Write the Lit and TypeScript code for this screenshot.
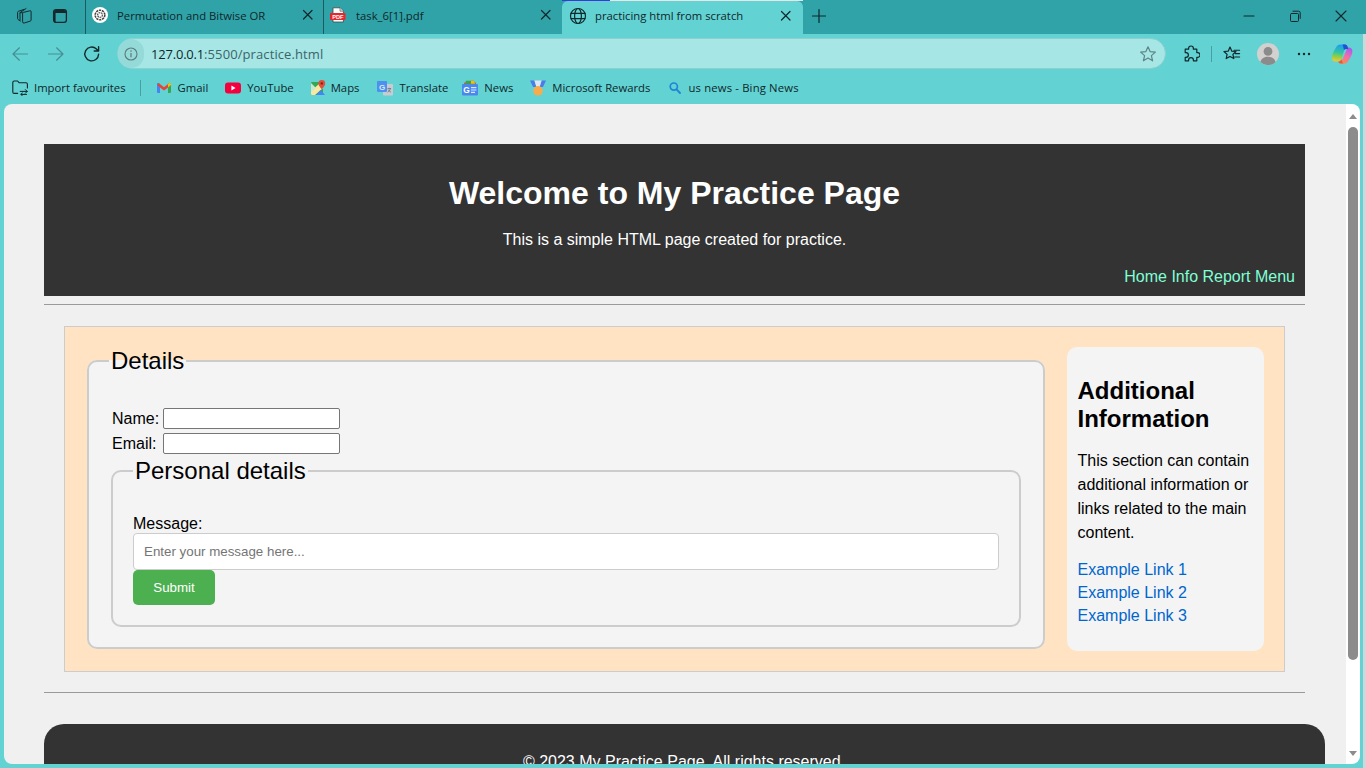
import { LitElement, html, css, svg } from "lit";
import { customElement } from "lit/decorators.js";

const line = (d: string, w = 1.2, c = "#1c2b2c") =>
  svg`<path d=${d} fill="none" stroke=${c} stroke-width=${w} stroke-linecap="round" stroke-linejoin="round"/>`;

const icon = (size: number, body: unknown) =>
  html`<svg width=${size} height=${size} viewBox="0 0 ${size} ${size}">${body}</svg>`;

const closeX = icon(12, line("M1.5 1.5 10 10M10 1.5 1.5 10", 1.2, "#10272a"));

const globe = icon(
  18,
  svg`<circle cx="9" cy="9" r="7.5" fill="none" stroke="#0f2a2d" stroke-width="1.2"/>
    <ellipse cx="9" cy="9" rx="3.4" ry="7.5" fill="none" stroke="#0f2a2d" stroke-width="1.2"/>
    ${line("M2 6.4h14M2 11.6h14", 1.2, "#0f2a2d")}`,
);

const knot = icon(
  18,
  svg`<circle cx="9" cy="9" r="8" fill="#fff"/>
    <circle cx="9" cy="9" r="4.8" fill="none" stroke="#444" stroke-width="1.6" stroke-dasharray="2.2 .8"/>
    <circle cx="9" cy="9" r="2.4" fill="none" stroke="#555" stroke-width="1.3" stroke-dasharray="1.6 .6"/>`,
);

const pdf = icon(
  16,
  svg`<path d="M3 .8h7l3.4 3.4V15H3z" fill="#fff" stroke="#444" stroke-width=".8"/>
    <path d="M10 .8v3.4h3.4" fill="#ddd" stroke="#444" stroke-width=".6"/>
    <rect x="0" y="6" width="15.5" height="7" rx="1" fill="#e8262b"/>
    <text x="7.8" y="11.7" text-anchor="middle" font-family="Liberation Sans" font-size="5.6" font-weight="700" fill="#fff">PDF</text>`,
);

const workspaces = icon(
  18,
  line("M7.6 6.4a1 1 0 0 1 .7-1L14.8 3.8a1 1 0 0 1 1.3 1V13a1.2 1.2 0 0 1-.8 1.1L9.2 16a1.2 1.2 0 0 1-1.6-1.1ZM5.4 14 3.2 12.6a1.2 1.2 0 0 1-.6-1V5.4a1.2 1.2 0 0 1 .8-1.1L9 2.4M5 5.6 11 1.6M7.6 5.8 5 5.6 5 13", 1, "#14282b"),
);

const tabsIcon = icon(
  16,
  svg`<rect x="1.6" y="1.6" width="12.8" height="12.8" rx="2.4" fill="none" stroke="#14282b" stroke-width="1.3"/>
    <path d="M2 4a2 2 0 0 1 2-2h8a2 2 0 0 1 2 2v1H3.6v9H2z" fill="#14282b"/>`,
);

const back = (c: string) => icon(18, line("M16.5 9H2M8.4 2.8 2 9l6.4 6.2", 1.2, c));
const forward = (c: string) => icon(18, line("M1.5 9H16M9.6 2.8 16 9l-6.4 6.2", 1.2, c));
const reload = icon(18, line("M15.6 9.2A6.9 6.9 0 1 1 13.4 3.9L15.6 6M15.6 1.6V6H11.2", 1.4, "#13282b"));

const info = icon(
  14,
  svg`<circle cx="7" cy="7" r="6" fill="none" stroke="#5c7b7c" stroke-width="1.1"/>
    <path d="M7 6v4.2" stroke="#5c7b7c" stroke-width="1.2"/>
    <circle cx="7" cy="4" r=".8" fill="#5c7b7c"/>`,
);

const star = (c: string) =>
  line("M9 1.8 11.1 6.6 16.4 7.1 12.4 10.6 13.6 15.8 9 13.1 4.4 15.8 5.6 10.6 1.6 7.1 6.9 6.6Z", 1.2, c);

const extensions = icon(
  18,
  line("M6.6 4.2V3.4a2.4 2.4 0 0 1 4.8 0v.8h3.4v3.4h.8a2.4 2.4 0 0 1 0 4.8h-.8v3.4h-3.4v-.8a2.4 2.4 0 0 0-4.8 0v.8H3.2v-3.4h.8a2.4 2.4 0 0 0 0-4.8h-.8V4.2z", 1.2, "#10272a"),
);

const favourites = icon(
  18,
  svg`${line("M7 2 8.8 6.2 13 6.5 9.9 9.4 10.8 13.6 7 11.4 3.2 13.6 4.1 9.4 1 6.5 5.2 6.2Z", 1.2, "#10272a")}
    ${line("M11 5.2H16.6M12.2 8.6H16.6M11.6 12H16.6", 1.1, "#10272a")}`,
);

const avatar = icon(
  22,
  svg`<circle cx="11" cy="11" r="11" fill="#d3d1cf"/>
    <circle cx="11" cy="8.4" r="4.4" fill="#8b8b8b"/>
    <path d="M3.4 19C4.4 15.2 7.4 13.8 11 13.8s6.6 1.4 7.6 5.2A11 11 0 0 1 3.4 19Z" fill="#8b8b8b"/>`,
);

const dots = icon(
  16,
  svg`<circle cx="3" cy="8" r="1.2" fill="#10272a"/><circle cx="8" cy="8" r="1.2" fill="#10272a"/><circle cx="13" cy="8" r="1.2" fill="#10272a"/>`,
);

const copilot = html`<svg width="22" height="22" viewBox="0 0 22 22">
  <defs>
    <linearGradient id="cpa" x1="0.5" y1="0" x2="0.4" y2="1">
      <stop offset="0" stop-color="#1c9cf0"/><stop offset=".45" stop-color="#2fc4a8"/><stop offset=".75" stop-color="#9ccf3c"/><stop offset="1" stop-color="#f0c83c"/>
    </linearGradient>
    <linearGradient id="cpb" x1="0.7" y1="0" x2="0.3" y2="1">
      <stop offset="0" stop-color="#a45cf0"/><stop offset=".5" stop-color="#f06cb0"/><stop offset="1" stop-color="#ff8c40"/>
    </linearGradient>
  </defs>
  <path d="M5.6 3.6C6.4 2.2 7.8 1.4 9.4 1.4H15L10.6 15.6C10 17.6 8.6 18.6 7 18.6H4.4C2 18.6.4 16.6.8 14.2 1.2 10.6 3.6 7 5.6 3.6z" fill="url(#cpa)"/>
  <path d="M16.4 4.4h1.4c2.4 0 4 2 3.6 4.4-.4 3.4-2.4 6.6-4.4 9.4-.8 1.4-2.2 2.4-3.8 2.4H7.6c1.8-.4 3-1.6 3.6-3.4z" fill="url(#cpb)"/>
  <path d="M11.6 1.4H14c1.2 0 2.2.8 2.6 2l.8 3c-1.6-.8-3.2-.6-4.4.6L12.2 3.6c-.2-.8-.4-1.6-.6-2.2z" fill="#2450d0"/>
  <path d="M7.2 18.6c1.4 0 2.6-.8 3.2-2.4l.8 2.4c.2.8.6 1.4 1.2 2H9.8c-1.2 0-2.2-.8-2.6-2z" fill="#f0553c"/>
</svg>`;

const importFav = icon(
  16,
  svg`${line("M5.6 13.4H2.2A1.4 1.4 0 0 1 .8 12V2.4A1.4 1.4 0 0 1 2.2 1H5.6L7.2 2.8H14A1.4 1.4 0 0 1 15.4 4.2V8", 1.1, "#10272a")}
    ${line("M8.2 11.4H15.2M13.4 9.6l1.8 1.8-1.8 1.8M14.6 14.4H9M10.4 13l-1.6 1.4 1.6 1.4", 1, "#10272a")}`,
);

const gmail = icon(
  16,
  svg`<path d="M1 4.2c0-1 1-1.6 1.8-1L4 4v9H2a1 1 0 0 1-1-1z" fill="#4285f4"/>
    <path d="M15 4.2c0-1-1-1.6-1.8-1L12 4v9h2a1 1 0 0 0 1-1z" fill="#34a853"/>
    <path d="M2.6 3 8 7.2 13.4 3 12 7.4 8 10.4 4 7.4 1.2 5z" fill="#ea4335"/>
    <path d="M12 4l1.2-.9c.8-.5 1.8 0 1.8 1v1L12 7.4z" fill="#fbbc04"/>`,
);

const youtube = icon(
  16,
  svg`<rect x="0" y="2.5" width="16" height="11" rx="3" fill="#f5003c"/><path d="M6.4 5.6v4.8L10.6 8z" fill="#fff"/>`,
);

const maps = icon(
  16,
  svg`<rect x="1" y="2" width="12" height="13" rx="1" fill="#34a853"/><path d="M1 11 9 4l4 4-8 7H2a1 1 0 0 1-1-1z" fill="#fbe8a0"/>
    <path d="M6 15l4.6-5L15 15z" fill="#4285f4"/><path d="M1 3l5 5-5 4z" fill="#c9e8ce"/>
    <path d="M11.8 0a3.4 3.4 0 0 1 3.4 3.4c0 2.4-3.4 5.6-3.4 5.6S8.4 5.8 8.4 3.4A3.4 3.4 0 0 1 11.8 0z" fill="#e0503c"/>
    <circle cx="11.8" cy="3.4" r="1.2" fill="#8c1c14"/>`,
);

const translate = icon(
  16,
  svg`<rect x="6" y="4" width="10" height="11.5" rx="1" fill="#c7ccd2"/>
    <rect x="0" y="1" width="10" height="11" rx="1" fill="#4d90f0"/>
    <text x="5" y="9.8" text-anchor="middle" font-family="Liberation Sans" font-size="8" font-weight="700" fill="#dbe8fc">G</text>
    <path d="M10.5 8.6h3.6M12.2 7.8v.8M13.4 8.6c-.4 1.6-1.6 3-2.8 3.6M11.2 9.6c.6 1.2 1.6 2.2 2.8 2.6" stroke="#5a6670" stroke-width=".7" fill="none"/>`,
);

const news = icon(
  16,
  svg`<path d="M2.4 2.6 13.6 2.6 14.6 6H1.4z" fill="#ea4335"/>
    <path d="M4 .8h8l1 3H3z" fill="#34a853"/><path d="M9 .8h3l1 3H9z" fill="#fbbc04"/>
    <rect x="0" y="4" width="16" height="11.6" rx="1" fill="#4a88ee"/>
    <text x="4.6" y="13" text-anchor="middle" font-family="Liberation Sans" font-size="8.4" font-weight="700" fill="#fff">G</text>
    <path d="M9 7.6h5.4M9 10h5.4M9 12.4h4" stroke="#dbe8fc" stroke-width="1.2"/>`,
);

const rewards = icon(
  16,
  svg`<path d="M0 .6h4.4L6.4 7H3z" fill="#4a7de8"/><path d="M16 .6h-4.4L9.6 7H13z" fill="#4a7de8"/>
    <path d="M4.4.6h7.2L9.6 7H6.4z" fill="#dfe6f6"/>
    <circle cx="8" cy="10.8" r="4.8" fill="#f7ac4c"/>`,
);

const search = icon(
  14,
  svg`<circle cx="5.8" cy="5.6" r="3.6" fill="none" stroke="#1f86d6" stroke-width="1.7"/>${line("M8.6 8.4 12 12", 1.9, "#1f86d6")}`,
);

// after = space to the next bookmark, the labels have different widths here than in Segoe
const bookmarks = [
  { icon: gmail, label: "Gmail", gap: 6, after: 17 },
  { icon: youtube, label: "YouTube", gap: 6, after: 16 },
  { icon: maps, label: "Maps", gap: 5, after: 18 },
  { icon: translate, label: "Translate", gap: 6, after: 14 },
  { icon: news, label: "News", gap: 6, after: 17 },
  { icon: rewards, label: "Microsoft Rewards", gap: 6, after: 18 },
  { icon: search, label: "us news - Bing News", gap: 6, after: 0 },
];

@customElement("browser-chrome")
export class BrowserChrome extends LitElement {
  static override styles = css`
    :host {
      display: block;
      font-family: "Open Sans", "Noto Sans", sans-serif;
      color: #10272a;
    }

    svg {
      display: block;
      flex: none;
    }

    .tabbar {
      height: 34px;
      background: #2fa3a8;
      display: flex;
      align-items: stretch;
    }

    .side {
      width: 85px;
      display: flex;
      align-items: center;
      gap: 19px;
      padding: 0 0 2px 15px;
      box-sizing: border-box;
    }

    .tab {
      width: 238px;
      display: flex;
      align-items: center;
      box-sizing: border-box;
      padding: 0 9px 4px 6px;
      font-size: 11.3px;
      border-left: 1px solid #1c5b60;
      background-clip: padding-box;
      position: relative;
    }

    .tab.first {
      padding-left: 5px;
    }

    .tab .fav {
      width: 26px;
      flex: none;
    }

    .tab .title {
      flex: 1;
      white-space: nowrap;
      overflow: hidden;
    }

    .tab.active {
      width: 241px;
      margin: 1px 0 0 1px;
      padding-left: 7px;
      padding-right: 11px;
      border-left: 0;
      background: #62d2d3;
      border-radius: 6px 6px 0 0;
    }

    .progress {
      position: absolute;
      left: 0;
      right: 0;
      top: -1px;
      height: 1px;
      background: linear-gradient(90deg, #3a3ad8 0 48px, #e6e6e6 48px);
    }

    .new-tab {
      margin-left: 8px;
      width: 18px;
      display: flex;
      align-items: center;
      padding-bottom: 3px;
    }

    .window {
      margin-left: auto;
      display: flex;
      align-items: center;
      padding: 0 16px 2px 0;
      gap: 34px;
    }

    .toolbar {
      height: 35px;
      background: #62d2d3;
      display: flex;
      align-items: center;
      padding: 4px 0 0 11px;
      box-sizing: border-box;
    }

    .nav {
      display: flex;
      gap: 18px;
      margin-right: 16px;
    }

    .url {
      width: 1049px;
      height: 31px;
      box-sizing: border-box;
      border-radius: 16px;
      background: #a6e7e6;
      border: 1px solid #8ecfcf;
      display: flex;
      align-items: center;
      font-size: 13px;
    }

    .url .info {
      width: 26px;
      height: 29px;
      border-radius: 15px;
      background: #93dad9;
      display: flex;
      align-items: center;
      justify-content: center;
      margin-right: 7px;
    }

    .url .host {
      color: #10272a;
      letter-spacing: -0.2px;
    }

    .url .path {
      color: #3d6468;
      letter-spacing: 0.1px;
    }

    .url .star {
      margin-left: auto;
      margin-right: 8px;
    }

    .tools {
      display: flex;
      align-items: center;
      margin-left: 16px;
    }

    .tools .ext-sep {
      margin: 0 11px;
    }

    .tools .profile {
      margin-left: 16px;
    }

    .tools .more {
      margin: 0 19px 0 17px;
    }

    .sep {
      width: 1px;
      height: 16px;
      background: #4a9da0;
    }

    .bookmarks {
      height: 35px;
      background: #62d2d3;
      display: flex;
      align-items: center;
      padding: 2px 0 0 12px;
      box-sizing: border-box;
      font-size: 11.3px;
    }

    .bm {
      display: flex;
      align-items: center;
      white-space: nowrap;
    }

    .bm.import {
      gap: 6px;
      margin-right: 15px;
    }

    .bm:last-child {
      letter-spacing: 0.16px;
    }

    .bookmarks .sep {
      margin-right: 15px;
      margin-left: -1px;
    }
  `;

  override render() {
    return html`
      <div class="tabbar">
        <div class="side">${workspaces} ${tabsIcon}</div>
        <div class="tab first">
          <span class="fav">${knot}</span><span class="title">Permutation and Bitwise OR</span>${closeX}
        </div>
        <div class="tab">
          <span class="fav">${pdf}</span><span class="title">task_6[1].pdf</span>${closeX}
        </div>
        <div class="tab active">
          <span class="progress"></span>
          <span class="fav">${globe}</span><span class="title">practicing html from scratch</span>${closeX}
        </div>
        <div class="new-tab">${icon(16, line("M8 1.5v13M1.5 8h13", 1.2, "#10272a"))}</div>
        <div class="window">
          ${icon(12, line("M1 6h10", 1.1, "#10272a"))}
          ${icon(12, line("M2.5 3.5h6a1 1 0 0 1 1 1v6a1 1 0 0 1-1 1h-6a1 1 0 0 1-1-1v-6a1 1 0 0 1 1-1zM4 1.2h5.6A1.6 1.6 0 0 1 11.2 2.8V8.4", 1, "#10272a"))}
          ${icon(12, line("M1 1l10 10M11 1 1 11", 1.1, "#10272a"))}
        </div>
      </div>
      <div class="toolbar">
        <div class="nav">${back("#468f93")} ${forward("#468f93")} ${reload}</div>
        <div class="url">
          <span class="info">${info}</span>
          <span class="host">127.0.0.1</span><span class="path">:5500/practice.html</span>
          <span class="star">${icon(18, star("#5f8486"))}</span>
        </div>
        <div class="tools">
          ${extensions}
          <span class="sep ext-sep"></span>
          ${favourites}
          <span class="profile">${avatar}</span>
          <span class="more">${dots}</span>
          ${copilot}
        </div>
      </div>
      <div class="bookmarks">
        <div class="bm import">${importFav} Import favourites</div>
        <span class="sep"></span>
        ${bookmarks.map(
          (b) => html`<div class="bm" style="gap: ${b.gap}px; margin-right: ${b.after}px">${b.icon} ${b.label}</div>`,
        )}
      </div>
    `;
  }
}

@customElement("practice-page")
export class PracticePage extends LitElement {
  static override styles = css`
    :host {
      display: block;
      flex: 1;
      min-width: 0;
      overflow: hidden;
      background: #f0f0f0;
      font-family: "Liberation Sans", Arial, sans-serif;
      font-size: 16px;
      color: #000;
    }

    .body {
      padding: 40px 41px 0 40px;
    }

    header {
      background: #333;
      color: #fff;
      text-align: center;
      padding: 10px;
      height: 152px;
      box-sizing: border-box;
    }

    h1 {
      font-size: 32px;
      line-height: 37px;
      margin: 21px 0 19px;
    }

    header p {
      margin: 0 0 19px;
      line-height: 18px;
    }

    nav {
      text-align: right;
      color: #7fffd4;
    }

    hr {
      margin: 8px 0 0;
      border: 0;
      border-top: 1px solid #9a9a9a;
      height: 0;
    }

    main {
      margin: 21px 20px 20px;
      border: 1px solid #ccc;
      background: #ffe3c3;
      padding: 20px;
      display: flex;
      gap: 20px;
      align-items: stretch;
    }

    fieldset {
      margin: 0 2px;
      border: 2px solid #ccc;
      border-radius: 10px;
      background: #f4f4f4;
      padding: 20px;
      min-width: 0;
    }

    legend {
      font-size: 24px;
      line-height: 28px;
      padding: 0 2px;
    }

    .details {
      flex: 1;
      padding-top: 31px;
      margin-bottom: 2px;
    }

    .row {
      display: flex;
      align-items: center;
      height: 25px;
      padding-left: 3px;
    }

    .row label {
      width: 51px;
    }

    .row input {
      width: 177px;
      height: 21px;
      box-sizing: border-box;
      border: 1px solid #767676;
      border-radius: 2px;
      background: #fff;
      padding: 0;
      margin: 0;
    }

    .personal {
      margin: 1px 2px 0 2px;
      padding: 30px 20px 20px;
    }

    .personal label {
      display: block;
      line-height: 18px;
    }

    .personal input {
      display: block;
      width: 100%;
      height: 37px;
      box-sizing: border-box;
      border: 1px solid #ccc;
      border-radius: 4px;
      padding: 0 10px;
      margin: 0;
      font: 13.33px "Liberation Sans", Arial, sans-serif;
      background: #fff;
    }

    .personal input::placeholder {
      color: #757575;
    }

    button {
      display: block;
      width: 82px;
      height: 35px;
      border: 0;
      border-radius: 5px;
      background: #4caf50;
      color: #fff;
      font: 13.33px "Liberation Sans", Arial, sans-serif;
      padding: 0;
    }

    aside {
      width: 197px;
      box-sizing: border-box;
      flex: none;
      background: #f4f4f4;
      border-radius: 10px;
      padding: 10px 10.5px;
    }

    h2 {
      font-size: 24px;
      line-height: 28px;
      margin: 20px 0 16px;
    }

    aside p {
      margin: 0 0 13px;
      line-height: 24px;
    }

    aside a {
      display: block;
      line-height: 23px;
      color: #0066cc;
      text-decoration: none;
    }

    footer {
      width: 1281px;
      margin-top: 31px;
      background: #333;
      color: #fff;
      text-align: center;
      padding: 29px 1px 0 0;
      box-sizing: border-box;
      height: 60px;
      border-radius: 20px 20px 0 0;
      line-height: 18px;
    }
  `;

  override render() {
    return html`
      <div class="body">
        <header>
          <h1>Welcome to My Practice Page</h1>
          <p>This is a simple HTML page created for practice.</p>
          <nav>Home Info Report Menu</nav>
        </header>
        <hr />
        <main>
          <fieldset class="details">
            <legend>Details</legend>
            <div class="row"><label>Name:</label><input type="text" /></div>
            <div class="row"><label>Email:</label><input type="text" /></div>
            <fieldset class="personal">
              <legend>Personal details</legend>
              <label>Message:</label>
              <input type="text" placeholder="Enter your message here..." />
              <button>Submit</button>
            </fieldset>
          </fieldset>
          <aside>
            <h2>Additional Information</h2>
            <p>This section can contain additional information or links related to the main content.</p>
            <a href="#">Example Link 1</a>
            <a href="#">Example Link 2</a>
            <a href="#">Example Link 3</a>
          </aside>
        </main>
        <hr />
        <footer>© 2023 My Practice Page. All rights reserved.</footer>
      </div>
    `;
  }
}

@customElement("app-root")
export class AppRoot extends LitElement {
  static override styles = css`
    :host {
      display: flex;
      width: 1366px;
      height: 768px;
      overflow: hidden;
      background: #62d2d3;
    }

    .frame {
      width: 1363px;
      height: 768px;
      display: flex;
      flex-direction: column;
    }

    .edge {
      flex: 1;
      background: linear-gradient(#2fa3a8 0 34px, #cfd8d8 34px);
    }

    .viewport {
      flex: 1;
      min-height: 0;
      margin: 0 3px 4px 4px;
      display: flex;
      border-radius: 8px;
      overflow: hidden;
    }

    .scrollbar {
      width: 14px;
      flex: none;
      background: #fff;
      display: flex;
      flex-direction: column;
      align-items: center;
    }

    .arrow-up {
      margin: 10px 0 8px;
      border: 4px solid transparent;
      border-top: 0;
      border-bottom: 5px solid #8c8c8c;
    }

    .thumb {
      width: 10px;
      height: 533px;
      border-radius: 5px;
      background: #8c8c8c;
      flex: none;
    }

    .arrow-down {
      margin-top: auto;
      margin-bottom: 8px;
      border: 4px solid transparent;
      border-bottom: 0;
      border-top: 5px solid #8c8c8c;
    }
  `;

  override render() {
    return html`
      <div class="frame">
        <browser-chrome></browser-chrome>
        <div class="viewport">
          <practice-page></practice-page>
          <div class="scrollbar">
            <span class="arrow-up"></span>
            <span class="thumb"></span>
            <span class="arrow-down"></span>
          </div>
        </div>
      </div>
      <div class="edge"></div>
    `;
  }
}
